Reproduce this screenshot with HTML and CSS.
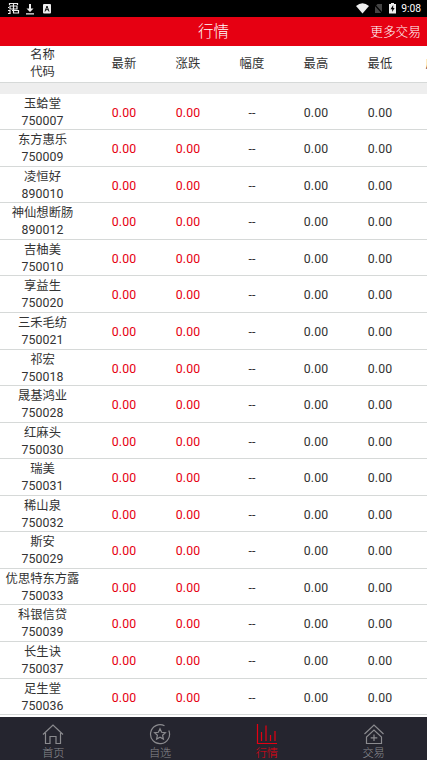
FILE: index.html
```html
<!DOCTYPE html>
<html lang="zh-CN">
<head>
  <meta charset="UTF-8" />
  <meta name="viewport" content="width=device-width, initial-scale=1.0"/>
  <title>行情</title>
  <link rel="stylesheet" href="styles.css">
</head>
<body>

<div class="statusbar">
  <svg class="debug" width="13" height="13" viewBox="0 0 13 13">
    <path d="M2.500 3V1.500h8V3M3 4h7v3H3zM6.500 1.500v9.500M1 5.500h1M1 8.500h2v3H1M6 11h5.500V8.500H5" />
  </svg>
  <svg class="download" width="10" height="12" viewBox="0 0 10 12">
    <path d="M4 1h2v4.500h2.500L5 9 1.500 5.500H4zM1 10.200h8v1.200H1z" />
  </svg>
  <svg class="keyboard" width="8" height="10" viewBox="0 0 8 10">
    <rect width="8" height="9.500" rx="1" />
    <path d="M2 7.500L4 2l2 5.500M2.800 5.700h2.400" />
  </svg>
  <span class="space"></span>
  <svg class="wifi" width="13" height="11" viewBox="0 0 13 11">
    <path d="M0 3Q6.500-2.500 13 3L6.500 10.500z" />
  </svg>
  <svg class="nosim" width="9" height="11" viewBox="0 0 9 11">
    <path d="M3.500 1H8v9H1V3.500z" />
    <path class="slash" d="M0 1l8.500 9.500" />
  </svg>
  <svg class="battery" width="7" height="11" viewBox="0 0 7 11">
    <path d="M2 0h3v1h2v9.500H0V1h2z" />
    <path class="bolt" d="M4.200 2L1.500 6.200h1.700V9L5.600 5H4.200z" />
  </svg>
  <span class="clock">9:08</span>
</div>

<header>
  <h1>行情</h1>
  <a class="more">更多交易</a>
</header>

<main>
  <div class="row head">
    <div class="name">名称<br>代码</div>
    <span>最新</span>
    <span>涨跌</span>
    <span>幅度</span>
    <span>最高</span>
    <span>最低</span>
    <span>成交量</span>
  </div>
  <div class="divider"></div>
  <div id="stockList"></div>
</main>

<nav>
  <a>
    <svg width="22" height="22" viewBox="0 0 22 22">
      <path d="M1 11.500L11 2l10 9.500M3.500 10v10.500H8v-7h6v7h4.500V10" />
    </svg>
    首页
  </a>
  <a>
    <svg width="22" height="22" viewBox="0 0 22 22">
      <path d="M15.500 2.800A9.500 9.500 0 1 0 19.800 7.500" />
      <path d="M11 5.800l1.600 3.500 3.800.4-2.800 2.600.8 3.800-3.400-1.900-3.400 1.900.8-3.800-2.800-2.600 3.800-.4z" />
    </svg>
    自选
  </a>
  <a class="active">
    <svg width="22" height="22" viewBox="0 0 22 22">
      <path d="M1.500 1v19.500H21M5.500 9v9M10 2.500V18M14.500 12v6M19 8v10" />
    </svg>
    行情
  </a>
  <a>
    <svg width="22" height="22" viewBox="0 0 22 22">
      <path d="M1.500 11L11 2l9.500 9M3.500 20.500v-6.500L11 7l7.500 7v6.500zM11 11.500v6.500M7.700 14.800h6.600" />
    </svg>
    交易
  </a>
</nav>

<script>
  const stocks = [
    { name: "玉蛤堂", code: "750007" },
    { name: "东方惠乐", code: "750009" },
    { name: "凌恒好", code: "890010" },
    { name: "神仙想断肠", code: "890012" },
    { name: "吉柚美", code: "750010" },
    { name: "享益生", code: "750020" },
    { name: "三禾毛纺", code: "750021" },
    { name: "祁宏", code: "750018" },
    { name: "晟基鸿业", code: "750028" },
    { name: "红麻头", code: "750030" },
    { name: "瑞美", code: "750031" },
    { name: "稀山泉", code: "750032" },
    { name: "斯安", code: "750029" },
    { name: "优思特东方露", code: "750033" },
    { name: "科银信贷", code: "750039" },
    { name: "长生诀", code: "750037" },
    { name: "足生堂", code: "750036" }
  ];

  const list = document.getElementById("stockList");
  stocks.forEach(s => {
    const row = document.createElement("div");
    row.className = "row";
    row.innerHTML = `
      <div class="name">${s.name}<br><b>${s.code}</b></div>
      <span class="up">0.00</span>
      <span class="up">0.00</span>
      <span>--</span>
      <span>0.00</span>
      <span>0.00</span>`;
    list.appendChild(row);
  });
</script>
</body>
</html>
```
FILE: styles.css
```css
* {
  box-sizing: border-box;
}
body {
  font-family: Roboto, "Noto Sans CJK SC", sans-serif;
  margin: 0;
  height: 760px;
  display: flex;
  flex-direction: column;
  overflow: hidden;
  background: #fff;
  color: #333;
}

/* system status bar */
.statusbar {
  height: 17px;
  flex: none;
  display: flex;
  align-items: center;
  padding: 0 6px 0 7px;
  background: #000;
  color: #fff;
}
.statusbar svg {
  fill: #eee;
}
.statusbar .debug {
  fill: none;
  stroke: #eee;
  stroke-width: 1.2;
}
.download {
  margin-left: 5px;
}
.keyboard {
  margin-left: 8px;
}
.keyboard path {
  fill: none;
  stroke: #111;
}
.space {
  flex: 1;
}
.statusbar .nosim {
  margin-left: 5px;
  fill: #444;
}
.slash {
  stroke: #000;
  stroke-width: 1.2;
}
.battery {
  margin-left: 6px;
}
.bolt {
  fill: #000;
}
.clock {
  margin-left: 5px;
  padding-top: 1px;
  font-size: 10.300px;
  line-height: 16px;
}

header {
  height: 29px;
  flex: none;
  display: grid;
  grid-template-columns: 1fr auto 1fr;
  align-items: center;
  padding: 1px 6px 0;
  background: #e60012;
  color: #fff;
}
h1 {
  grid-column: 2;
  margin: 0;
  padding-top: 1px;
  font-size: 15.500px;
  font-weight: 300;
  line-height: 27px;
}
.more {
  justify-self: end;
  padding-bottom: 3px;
  font-size: 12.700px;
  font-weight: 300;
}

/* quote table */
main {
  flex: 1;
  min-height: 0;
  overflow: hidden;
}
.row {
  display: grid;
  grid-template-columns: 85px repeat(6, 64px);
  align-items: center;
  height: 36.570px;
  padding-top: 2px;
  border-bottom: 1px solid #d6d9d8;
  font-size: 12.300px;
  line-height: 17px;
  text-align: center;
}
.head {
  padding-top: 1px;
}
.row span {
  margin: 0 -7px 0 7px;
  padding-top: 1px;
  white-space: nowrap;
  letter-spacing: 0.1px;
}
.name b {
  font-weight: 400;
  letter-spacing: 0.1px;
}
.row .up {
  color: #e60012;
}
.divider {
  height: 11px;
  background: #eee;
}

nav {
  height: 43px;
  flex: none;
  display: grid;
  grid-template-columns: repeat(4, 1fr);
  background: #25252f;
}
nav a {
  display: flex;
  flex-direction: column;
  align-items: center;
  padding-top: 6px;
  color: #8b8b8f;
  font-size: 11.200px;
  font-weight: 300;
  line-height: 17px;
}
nav svg {
  fill: none;
  stroke: currentColor;
  stroke-width: 1.2;
}
nav .active {
  color: #e60012;
}
```
